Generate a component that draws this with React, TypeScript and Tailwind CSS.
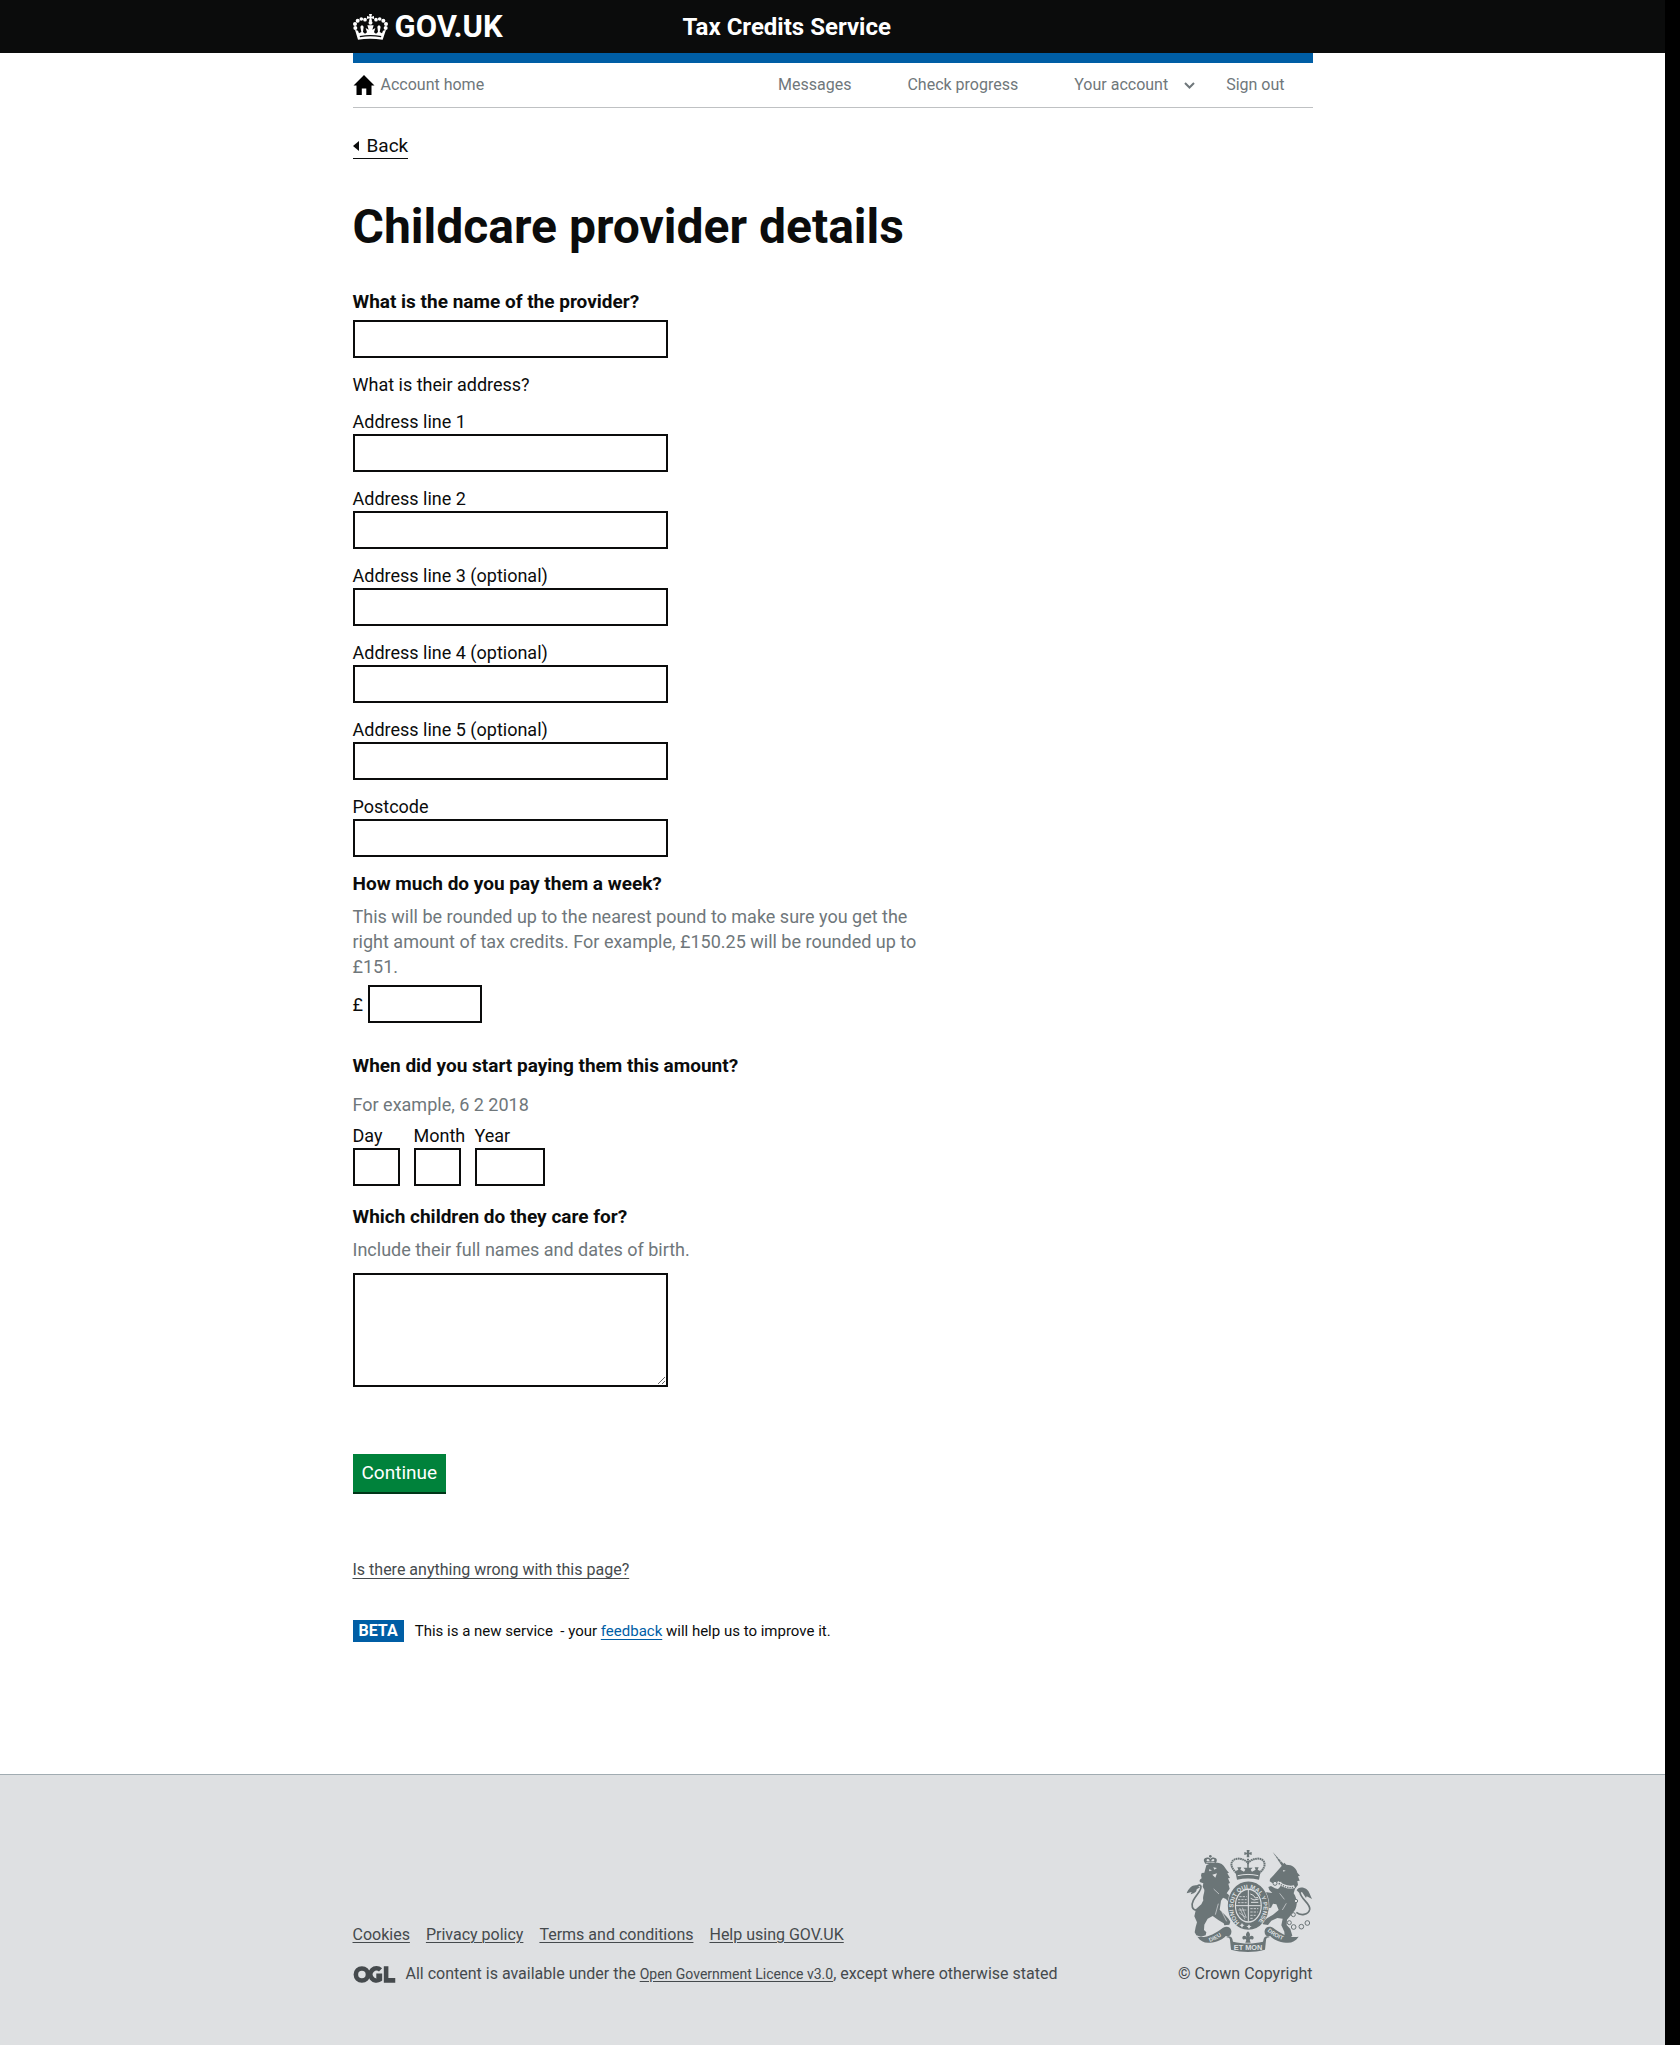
import React from "react";

function CrownLogo() {
  return (
    <svg viewBox="0 0 105 78" className="h-[26px] w-[35px] shrink-0" fill="#fff" aria-hidden="true">
      <path d="M48 0h9l-2 8 8-2v9l-8-2 2 8h-9l2-8-8 2V6l8 2z" />
      <circle cx="52.500" cy="26" r="6" />
      <circle cx="36" cy="17" r="5.500" />
      <circle cx="25" cy="15" r="5.500" />
      <circle cx="14" cy="20" r="6" />
      <circle cx="6" cy="30" r="6" />
      <circle cx="7" cy="42" r="6" />
      <circle cx="69" cy="17" r="5.500" />
      <circle cx="80" cy="15" r="5.500" />
      <circle cx="91" cy="20" r="6" />
      <circle cx="99" cy="30" r="6" />
      <circle cx="98" cy="42" r="6" />
      <path d="M6 47l9 3 3 8 7-4-3-16 5-5 5 5-2 16 6 5 6-4-4-13 9 5-4-13h19l-4 13 9-5-4 13 6 4 6-5-2-16 5-5 5 5-3 16 7 4 3-8 9-3-10 30c-26-4-51-4-74 0z" />
      <path d="M20 66c22-4 43-4 65 0l-1 4c-21-4-42-4-63 0z" fill="#0b0c0c" />
    </svg>
  );
}

function HomeIcon() {
  return (
    <svg viewBox="0 0 22 20" className="h-5 w-[22px] shrink-0" fill="#000" aria-hidden="true">
      <path d="M11 0l10.500 10.500H18.500V20h-5.200v-6.500H8.800V20H3.500v-9.500H.5z" />
    </svg>
  );
}

function OglLogo() {
  return (
    <svg viewBox="0 0 129 52" className="h-[17px] w-[43px] shrink-0" aria-hidden="true">
      <g fill="none" stroke="#454a4d" strokeWidth="14">
        <circle cx="26" cy="26" r="18.500" />
        <path d="M83 12a18.500 18.500 0 1 0-2 29V30H70" />
        <path d="M100 1v43h28" />
      </g>
    </svg>
  );
}

function Crest() {
  return (
    <svg viewBox="78 54 384 318" className="h-[106px] w-32" fill="#6b7577" aria-hidden="true">
      {/* central crown */}
      <path d="M263 60h9l-2 8 8-2v9l-8-2 1 9h-8l1-9-8 2v-9l8 2z" />
      <g fill="none" stroke="#6b7577" strokeWidth="6" strokeDasharray="5 1.500">
        <path d="M232 128c-26-22-14-44 8-42 10 1 20 5 27 13 7-8 17-12 27-13 22-2 34 20 8 42" />
        <path d="M267 86v40" />
      </g>
      <path d="M229 124l9-5-3-7h12l-3 7 11 6 4-6-6-6h28l-6 6 4 6 11-6-3-7h12l-3 7 9 5-5 25c-22-5-44-5-66 0z" />
      <path d="M236 137c22-5 40-5 62 0" fill="none" stroke="#dee0e2" strokeWidth="3" />
      {/* lion */}
      <path d="M140 102c-8-10-7-18 2-19 6-1 10 1 12 4 2-3 6-5 12-4 9 1 10 9 3 19z" />
      <path d="M144 94c-3-5 0-8 3-7 3 0 4 2 5 7zM157 94c0-5 3-7 6-7s5 3 1 7z" fill="#dee0e2" />
      <circle cx="154" cy="79" r="4" />
      <path d="M141 99c9-3 19-3 28 0" fill="none" stroke="#dee0e2" strokeWidth="2" />
      <path d="M142 106c14-9 35-10 46-4 10 7 14 20 22 26l-5 2 8 14-6 1 6 14-5 2 4 15-9 14c7 4 10 10 10 18l-5 7-7-8-9-4-6 9-4 27c10 10 20 18 27 28l5 8-3 9-15 2-2-6-15-9-18-13-15 8-10 18-1 16 7 7-2 9-14 4-14-4-5-9 3-16 4-14-8-18 5-22 16-14 6-12c-3-12 4-22 3-32l-5-9 2-10-9-3c-3-2-3-6 0-9l4-3-2-9 2-7 8-1z" />
      <path d="M150 118l9 3-8 3zM163 112l11 2-8 5zM160 134l14-4-5 13z" fill="#dee0e2" />
      <path d="M178 221l-9 33m20-8l14 28m-39-97l16 15" fill="none" stroke="#dee0e2" strokeWidth="2" />
      <path d="M116 240c-18 2-20-15-13-29 9-18 29-34 22-44-6-6-15 5-22 14" fill="none" stroke="#6b7577" strokeWidth="5" />
      <path d="M83 190c6-16 17-26 30-24l10 6-10 6c0 9-9 13-18 15l3-7z" />
      {/* unicorn */}
      <path d="M341 66l38 41-8 5z" />
      <path d="M348 80l7-4M354 88l7-4M361 97l7-4" stroke="#dee0e2" strokeWidth="1.500" />
      <path d="M368 108l8-10 6 6c18 0 30 10 33 24l8 9-6 2 5 13-7 1 2 12-9 11-4 14c11 16 12 34 4 50l-10 13-14 16-1 16 11 12 6 20-9 8-14-5-1-15-9-19 4-20-16-2-18 8-10 13-15-2-4-10 14-7 20-12 17-14-7-17-10-2-6 12-10 2-5-8 8-16-10-7-14 4-12-8-2-10 11-7 8 7 14-3 16 2-9-9-3-9 8-3 12 7 9 2c8-7 11-14 10-22l-10 2-17 2-8-5 1-7 12-13z" />
      <path d="M372 120l8 2-7 3zM357 153c14 9 30 17 48 13l3 8c-20 6-39-2-54-14z" fill="#dee0e2" />
      <path d="M359 160c14 9 29 15 44 12" fill="none" stroke="#6b7577" strokeWidth="4" strokeDasharray="4 3" />
      <path d="M362 190l14 18m6 12l-12 20" fill="none" stroke="#dee0e2" strokeWidth="2" />
      <path d="M412 247c13 11 36 8 40-8 4-18-28-32-29-52 0-12 14-12 22 4" fill="none" stroke="#6b7577" strokeWidth="5" />
      <path d="M413 181c3-10 19-12 30-3 9 8 10 18 16 29l-16-8-2 5-12-18-8 3z" />
      <g fill="#dee0e2" stroke="#6b7577" strokeWidth="3">
        <circle cx="348" cy="160" r="6" />
        <circle cx="411" cy="213" r="5" />
        <circle cx="403" cy="254" r="6" />
        <circle cx="391" cy="278" r="6" />
        <circle cx="404" cy="291" r="7" />
        <circle cx="427" cy="290" r="7" />
        <circle cx="445" cy="279" r="7" />
      </g>
      {/* garter and shield */}
      <ellipse cx="268" cy="227" rx="63" ry="74" fill="#dee0e2" />
      <ellipse cx="268" cy="227" rx="51" ry="62" fill="none" stroke="#6b7577" strokeWidth="21" />
      <path id="garter" d="M242 278A45 56 0 1 1 294 278" fill="none" />
      <text fill="#dee0e2" className="font-['Liberation_Sans'] text-[18px] font-bold">
        <textPath href="#garter">HONI SOIT QUI MAL Y PENSE</textPath>
      </text>
      <ellipse cx="268" cy="227" rx="37" ry="47" />
      <g stroke="#dee0e2" strokeWidth="3" fill="none">
        <path d="M268 180v94M231 227h74" />
        <path d="M241 200h22M237 209h26M237 218h26" strokeWidth="2.500" strokeDasharray="7 3" />
        <path d="M274 192l9 4 6 8 8-2M275 205l10 5 14-3M276 217h22" />
        <path d="M242 234l16 34M250 233l12 30M240 248l20 14M238 240h24" strokeWidth="2" />
        <path d="M274 236h24M274 246h22M274 256h16M274 265h8" strokeWidth="2.500" strokeDasharray="7 3" />
      </g>
      <path d="M249 279l3 5 5 1-5 3-3 5-3-5-5-3 5-1zM270 283l3 5 5 1-5 3-3 5-3-5-5-3 5-1z" fill="#dee0e2" />
      {/* ribbon */}
      <path d="M115 320c28 5 52-8 77-27 12-6 23-2 25 9 2 12-8 21-17 16-4 8-32 22-50 20-14 1-26-5-35-18zM419 320c-28 5-52-8-77-27-12-6-23-2-25 9-2 12 8 21 17 16 4 8 32 22 50 20 14 1 26-5 35-18z" />
      <path d="M202 322c6-6 16-3 18 5l2 8c30 7 60 7 90 0l2-8c2-8 12-11 18-5-8 0-11 4-11 9l-3 28c-34 9-68 9-102 0l-3-28c0-5-3-9-11-9z" />
      <path id="left-ribbon" d="M152 336Q182 326 208 301" fill="none" />
      <path id="right-ribbon" d="M325 303Q350 326 388 335" fill="none" />
      <g fill="#dee0e2" className="font-['Liberation_Sans'] text-[17px] font-bold">
        <text><textPath href="#left-ribbon">DIEU</textPath></text>
        <text><textPath href="#right-ribbon">DROIT</textPath></text>
        <text x="267" y="360" textAnchor="middle" className="text-[22px]">ET MON</text>
      </g>
      <path d="M267 304c7 6 8 12 3 19 3-8 14-8 14 0 0 5-5 7-9 4l-3 3 3 8h-16l3-8-3-3c-4 3-9 1-9-4 0-8 11-8 14 0-5-7-4-13 3-19z" />
    </svg>
  );
}

const label = "block text-lg/[25px]";
const question = "block text-[19px]/[25px] font-bold";
const hint = "block text-lg/[25px] text-[#6f777b]";
const box = "block h-[38px] border-2 border-[#0b0c0c] bg-white px-1 text-lg/[25px]";
const footLink = "underline decoration-1 underline-offset-2";

const addressFields = [
  { id: "line1", text: "Address line 1" },
  { id: "line2", text: "Address line 2" },
  { id: "line3", text: "Address line 3 (optional)" },
  { id: "line4", text: "Address line 4 (optional)" },
  { id: "line5", text: "Address line 5 (optional)" },
  { id: "postcode", text: "Postcode" },
];

export default function App() {
  return (
    <div className="flex min-h-screen bg-white font-[Roboto,sans-serif] text-[#0b0c0c]">
      <div className="flex min-w-0 flex-1 flex-col">
        <header className="bg-[#0b0c0c] text-white">
          <div className="mx-auto flex h-[53px] max-w-[960px] items-center">
            <a href="#home" className="flex w-[330px] items-center gap-[7px]">
              <CrownLogo />
              <span className="text-[31px]/[30px] font-bold">GOV.UK</span>
            </a>
            <a href="#service" className="text-2xl font-bold">Tax Credits Service</a>
          </div>
        </header>

        <div className="mx-auto w-full max-w-[960px] flex-1">
          <nav aria-label="Account" className="flex h-[55px] items-center justify-between border-t-10 border-b border-t-[#005ea5] border-b-[#bfc1c3] pr-7 text-base text-[#6f777b]">
            <a href="#account-home" className="flex items-center gap-1.5">
              <HomeIcon />
              Account home
            </a>
            <div className="flex items-center">
              <a href="#messages" className="mr-14">Messages</a>
              <a href="#progress" className="mr-14">Check progress</a>
              <button type="button" className="mr-[31px] flex items-center gap-4">
                Your account
                <svg viewBox="0 0 11 7" className="h-[7px] w-[11px]" fill="none" stroke="#6f777b" strokeWidth="2" aria-hidden="true">
                  <path d="M1 1l4.500 4.500L10 1" />
                </svg>
              </button>
              <a href="#sign-out">Sign out</a>
            </div>
          </nav>

          <main>
            <a href="#back" className="mt-[26px] inline-flex items-center gap-2 border-b border-[#0b0c0c] text-[19px]/6">
              <svg viewBox="0 0 6 10" className="h-2.5 w-1.5" fill="#0b0c0c" aria-hidden="true">
                <path d="M6 0v10L0 5z" />
              </svg>
              Back
            </a>
            <h1 className="mt-[43px] text-5xl/[50px] font-bold">Childcare provider details</h1>

            <form className="mt-[37px] max-w-[580px]" onSubmit={(e) => e.preventDefault()}>
              <label htmlFor="provider" className={question}>What is the name of the provider?</label>
              <input id="provider" type="text" className={`${box} mt-1.5 w-[315px]`} />

              <fieldset className="mt-3.5">
                <legend className={label}>What is their address?</legend>
                <div className="mt-3 flex flex-col gap-3.5">
                  {addressFields.map((f) => (
                    <div key={f.id}>
                      <label htmlFor={f.id} className={label}>{f.text}</label>
                      <input id={f.id} type="text" className={`${box} w-[315px]`} />
                    </div>
                  ))}
                </div>
              </fieldset>

              <label htmlFor="amount" className="mt-3.5 block">
                <span className={question}>How much do you pay them a week?</span>
                <span className={`${hint} mt-2`}>
                  This will be rounded up to the nearest pound to make sure you get the right amount of tax credits. For example, £150.25 will be rounded up to £151.
                </span>
              </label>
              <div className="mt-1.5 flex items-center gap-1 text-lg/[25px]">
                <span className="w-[11px]">£</span>
                <input id="amount" type="text" className={`${box} w-[114px]`} />
              </div>

              <fieldset className="mt-[30px]">
                <legend className={question}>When did you start paying them this amount?</legend>
                <p className={`${hint} mt-3.5`}>For example, 6 2 2018</p>
                <div className="mt-1.5 flex">
                  <div className="w-[61px]">
                    <label htmlFor="day" className={label}>Day</label>
                    <input id="day" type="text" className={`${box} w-[47px]`} />
                  </div>
                  <div className="w-[61px]">
                    <label htmlFor="month" className={label}>Month</label>
                    <input id="month" type="text" className={`${box} w-[47px]`} />
                  </div>
                  <div>
                    <label htmlFor="year" className={label}>Year</label>
                    <input id="year" type="text" className={`${box} w-[70px]`} />
                  </div>
                </div>
              </fieldset>

              <label htmlFor="children" className="mt-[18px] block">
                <span className={question}>Which children do they care for?</span>
                <span className={`${hint} mt-2`}>Include their full names and dates of birth.</span>
              </label>
              <textarea id="children" className="mt-[11px] block h-[114px] w-[315px] resize border-2 border-[#0b0c0c] bg-white px-1 text-lg/[25px]" />

              <button type="submit" className="mt-[67px] block h-10 border-b-2 border-[#003618] bg-[#00823b] px-[9px] text-[19px] text-white">Continue</button>
            </form>

            <a href="#problem" className="mt-[66px] inline-block align-top text-base/5 text-[#454a4d] underline decoration-1 underline-offset-3">Is there anything wrong with this page?</a>

            <div className="mt-10 mb-[100px] flex items-center gap-[11px] text-[15px]/[22px]">
              <strong className="bg-[#005ea5] px-1.5 text-base/[22px] text-white">BETA</strong>
              <p>
                This is a new service &nbsp;- your <a href="#feedback" className="text-[#005ea5] underline decoration-1 underline-offset-3">feedback</a> will help us to improve it.
              </p>
            </div>
          </main>
        </div>

        <footer className="border-t border-[#a1acb2] bg-[#dee0e2] pt-[73px] pb-[61px] text-base/5 text-[#454a4d]">
          <div className="mx-auto flex max-w-[960px] items-end justify-between">
            <div>
              <ul className="flex gap-4">
                <li><a href="#cookies" className={footLink}>Cookies</a></li>
                <li><a href="#privacy" className={footLink}>Privacy policy</a></li>
                <li><a href="#terms" className={footLink}>Terms and conditions</a></li>
                <li><a href="#help" className={footLink}>Help using GOV.UK</a></li>
              </ul>
              <div className="mt-[19px] flex items-center gap-2.5">
                <OglLogo />
                <p>
                  All content is available under the <a href="#licence" className={`${footLink} text-sm/5`}>Open Government Licence v3.0</a>, except where otherwise stated
                </p>
              </div>
            </div>
            <a href="#copyright" className="flex flex-col items-end gap-2.5">
              <Crest />
              © Crown Copyright
            </a>
          </div>
        </footer>
      </div>
      <div className="w-[15px] shrink-0 bg-black" />
    </div>
  );
}
